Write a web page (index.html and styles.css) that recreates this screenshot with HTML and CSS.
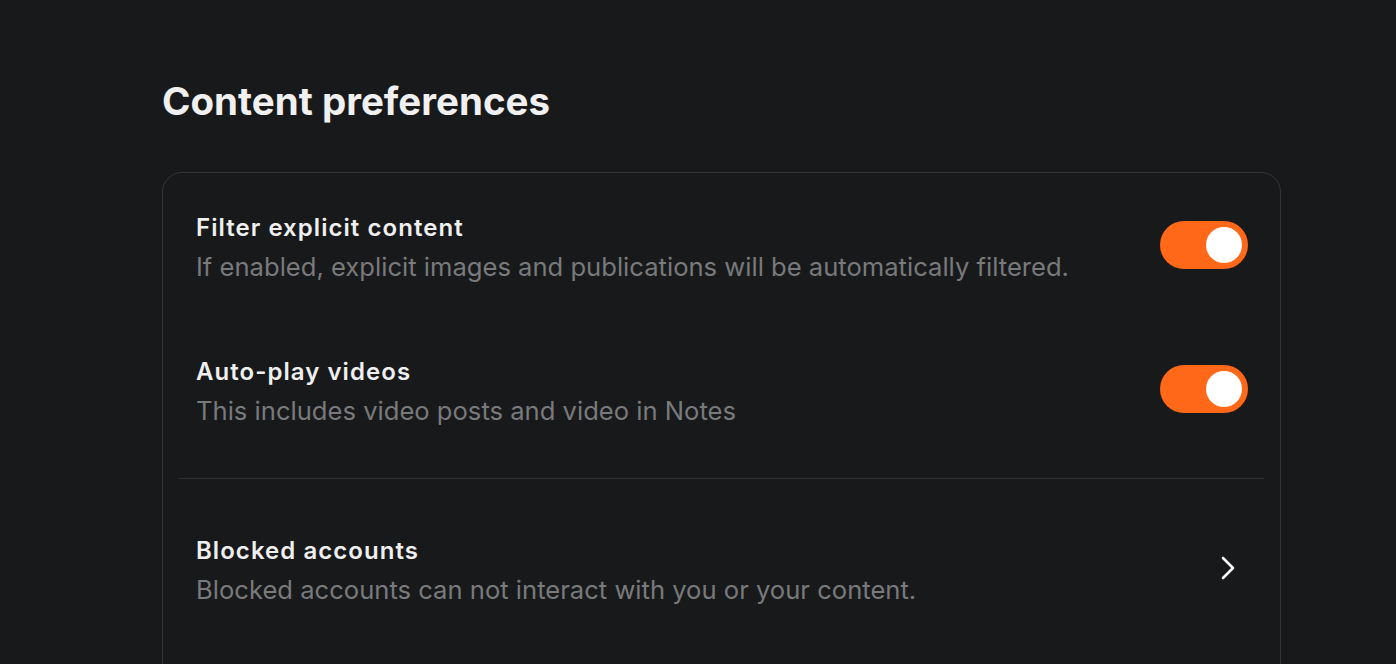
FILE: index.html
```html
<!DOCTYPE html>
<html lang="en">
  <head>
    <meta charset="UTF-8" />
    <meta name="viewport" content="width=device-width, initial-scale=1.0" />
    <title>Content preferences</title>
    <link rel="stylesheet" href="styles.css">
  </head>
  <body>
    <div class="page">
      <h1 class="page-title">Content preferences</h1>

      <div class="card">
        <div class="row">
          <div class="row-text">
            <div class="row-title">Filter explicit content</div>
            <div class="row-desc">If enabled, explicit images and publications will be automatically filtered.</div>
          </div>
          <div class="toggle on"><span class="knob"></span></div>
        </div>

        <div class="row">
          <div class="row-text">
            <div class="row-title">Auto-play videos</div>
            <div class="row-desc">This includes video posts and video in Notes</div>
          </div>
          <div class="toggle on"><span class="knob"></span></div>
        </div>

        <div class="divider"></div>

        <div class="row link">
          <div class="row-text">
            <div class="row-title">Blocked accounts</div>
            <div class="row-desc">Blocked accounts can not interact with you or your content.</div>
          </div>
          <svg class="chevron" width="14" height="24" viewBox="0 0 14 24" fill="none">
            <path d="M2 2 L12 12 L2 22" stroke="#f4f4f4" stroke-width="2.6" stroke-linecap="round" stroke-linejoin="round" />
          </svg>
        </div>
      </div>
    </div>
  </body>
</html>
```

FILE: styles.css
```css
body {
  margin: 0;
  background-color: #18191b;
  font-family: Inter, "Noto Sans", sans-serif;
  color: #f2f2f2;
  height: 664px;
  overflow: hidden;
}
.page {
  width: 1119px;
  padding: 77px 0 0 162px;
}
.page-title {
  margin: 0 0 47px;
  font-size: 38.5px;
  line-height: 48px;
  font-weight: 700;
  color: #f0f0f0;
}
.card {
  border: 1px solid #343537;
  border-radius: 20px;
  padding: 0 16px;
  height: 600px;
}
.row {
  display: flex;
  align-items: center;
  justify-content: space-between;
  height: 144px;
  padding: 0 16px 0 17px;
}
.row-text {
  padding-top: 5px;
}
.row-title {
  font-size: 24px;
  line-height: 30px;
  font-weight: 600;
  letter-spacing: 1.05px;
  color: #efefef;
}
.row-desc {
  margin-top: 8px;
  font-size: 25.6px;
  line-height: 32px;
  color: #787a7c;
}
.toggle {
  width: 88px;
  height: 48px;
  border-radius: 24px;
  background: #3a3b3d;
  padding: 6px;
  box-sizing: border-box;
  display: flex;
}
.toggle.on {
  background: #ff6719;
  justify-content: flex-end;
}
.knob {
  width: 36px;
  height: 36px;
  border-radius: 50%;
  background: #ffffff;
}
.divider {
  height: 1px;
  background: #303133;
  margin: 17px 0 17px;
}
.chevron {
  margin-right: 13px;
}
```
